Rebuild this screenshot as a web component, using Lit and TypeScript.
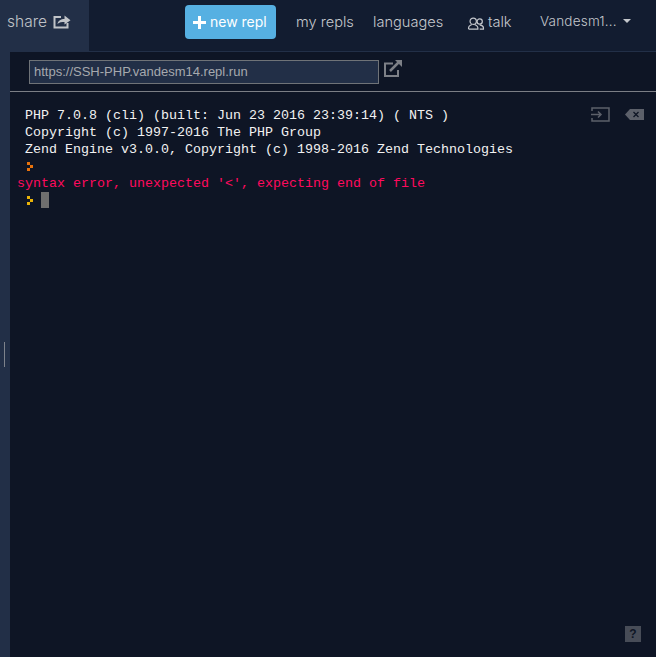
import { LitElement, html, css } from "lit";
import { customElement } from "lit/decorators.js";

@customElement("app-root")
export class AppRoot extends LitElement {
  static styles = css`
    :host { display: block; width: 656px; height: 657px; overflow: hidden; background: #121c30; font-family: "Inter", "Liberation Sans", sans-serif; font-weight: 300; color: #c4c7cc; }
    .nav { display: flex; align-items: stretch; height: 51px; border-bottom: 1px solid #222f47; }
    .share { width: 89px; box-sizing: border-box; background: #222f47; display: flex; align-items: center; padding: 0 0 10px 7px; gap: 6px; font-size: 15.5px; color: #c0c3c8; margin-bottom: -1px; }
    .share svg { display: block; margin-top: 1px; }
    .btn { margin: 5px 0 0 96px; width: 91px; height: 34px; box-sizing: border-box; background: #56b0e2; border-radius: 4px; color: #fff; display: flex; align-items: center; padding: 0 0 2px 8px; gap: 4px; font-size: 14px; font-weight: 400; white-space: nowrap; }
    .btn svg { margin-top: 2px; }
    .link { margin-top: 5px; height: 34px; display: flex; align-items: center; font-size: 14.6px; gap: 3px; color: #c4c7cc; white-space: nowrap; }
    .l1 { margin-left: 20px; width: 77px; }
    .l2 { width: 94px; }
    .l3 { width: 73px; }
    .l3 svg { margin-top: 3px; }
    .user { font-size: 13.500px; letter-spacing: 0.2px; gap: 6px; margin-top: 4px; }
    .caret { width: 0; height: 0; border-left: 4px solid transparent; border-right: 4px solid transparent; border-top: 4px solid #c4c7cc; }
    .body { display: flex; height: 605px; }
    .side { width: 10px; background: #222f47; display: flex; align-items: center; padding-left: 4px; box-sizing: border-box; }
    .grip { width: 1px; height: 25px; background: #7d828b; margin-top: -1px; }
    .main { flex: 1; background: #0e1525; display: flex; flex-direction: column; position: relative; }
    .urlbar { height: 40px; box-sizing: border-box; border-bottom: 1px solid #7b7e85; display: flex; padding: 8px 0 0 19px; gap: 4px; }
    .url { width: 350px; height: 24px; box-sizing: border-box; background: #222f47; border: 1px solid #6f7378; color: #a6a9ae; font: 13px "Liberation Sans", sans-serif; line-height: 22px; padding-left: 4px; }
    .ext { display: block; }
    .term { font: 13.33px/17px "Liberation Mono", monospace; color: #f2f2f2; padding: 15px 0 0 15px; flex: 1; }
    .row { height: 17px; display: flex; align-items: center; white-space: pre; }
    .err { color: #ff0a5e; margin-left: -8px; height: 17px; white-space: pre; }
    .cursor { width: 8px; height: 16px; background: #6f6f6f; margin-left: 8px; align-self: flex-start; }
    .prompt { display: block; }
    .tools { position: absolute; top: 55px; left: 581px; display: flex; gap: 15px; align-items: center; }
    .help { position: absolute; right: 15px; bottom: 15px; width: 16px; height: 16px; background: #474c57; color: #0e1525; font: bold 12px/16px "Liberation Sans", sans-serif; text-align: center; }
  `;

  private prompt(color: string) {
    return html`<svg class="prompt" width="8" height="9" viewBox="0 0 8 9" fill=${color}><rect x="2" y="0" width="3" height="3"/><rect x="5" y="3" width="3" height="3"/><rect x="2" y="6" width="3" height="3"/></svg>`;
  }

  render() {
    return html`
      <div class="nav">
        <div class="share">share
          <svg width="18" height="15" viewBox="0 0 18 15" fill="none"><path d="M8 3H1.500v10.500h13V9" stroke="#c0c3c8" stroke-width="2"/><path d="M4.500 10C5 6.500 8 5 11.500 5V1.500l6 4.800-6 4.200V8C9 8 6 8.200 4.500 10z" fill="#c0c3c8"/></svg>
        </div>
        <div class="btn">
          <svg width="13" height="13" viewBox="0 0 13 13" fill="#fff"><rect x="5" y="0" width="3" height="13"/><rect x="0" y="5" width="13" height="3"/></svg>
          new repl
        </div>
        <div class="link l1">my repls</div>
        <div class="link l2">languages</div>
        <div class="link l3">
          <svg width="18" height="13" viewBox="0 0 18 14" fill="none" stroke="#c4c7cc" stroke-width="1.300"><circle cx="6" cy="4.500" r="3.400"/><path d="M1 13v-1.500C1 9.500 3 9 4.500 8M7.500 8C9 9 11 9.500 11 11.500V13H1"/><circle cx="13" cy="4.800" r="2.800"/><path d="M13 8.500c2 .500 4 1 4 3V13h-4"/></svg>
          talk
        </div>
        <div class="link user">Vandesm1... <span class="caret"></span></div>
      </div>
      <div class="body">
        <div class="side"><div class="grip"></div></div>
        <div class="main">
          <div class="urlbar">
            <div class="url">https://SSH-PHP.vandesm14.repl.run</div>
            <svg class="ext" width="20" height="18" viewBox="0 0 20 18" fill="none" stroke="#7d8087" stroke-width="2"><path d="M10 3.500H2V16h13V10"/><path d="M7 11L16 2" stroke-width="2.500"/><path d="M12 0h7v7z" fill="#7d8087" stroke="none"/></svg>
          </div>
          <div class="term">
            <div class="row">PHP 7.0.8 (cli) (built: Jun 23 2016 23:39:14) ( NTS )</div>
            <div class="row">Copyright (c) 1997-2016 The PHP Group</div>
            <div class="row">Zend Engine v3.0.0, Copyright (c) 1998-2016 Zend Technologies</div>
            <div class="row">${this.prompt("#e8720c")}</div>
            <div class="err">syntax error, unexpected '&lt;', expecting end of file</div>
            <div class="row">${this.prompt("#eab308")}<span class="cursor"></span></div>
          </div>
          <div class="tools">
            <svg width="19" height="15" viewBox="0 0 19 15" fill="none" stroke="#5c606a" stroke-width="1.500"><path d="M1 4V1h17v13H1v-3"/><path d="M0 7.500h10M7 4.500l3 3-3 3"/></svg>
            <svg width="19" height="11" viewBox="0 0 19 11"><path d="M5 0h14v11H5L0 5.500z" fill="#5c606a"/><path d="M8.500 3l5 5M13.500 3l-5 5" stroke="#0e1525" stroke-width="1.300"/></svg>
          </div>
          <div class="help">?</div>
        </div>
      </div>
    `;
  }
}
